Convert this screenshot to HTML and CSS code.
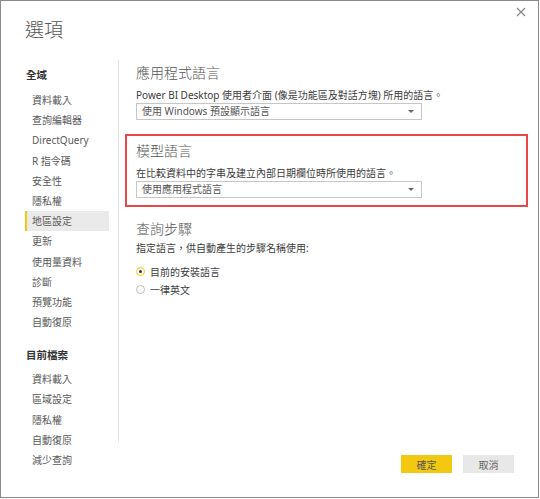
FILE: index.html
```html
<!DOCTYPE html>
<html lang="zh-Hant">
<head>
<meta charset="utf-8">
<title>選項</title>
<link rel="stylesheet" href="styles.css">
</head>
<body>
<div class="dialog">
  <div class="close" aria-label="關閉">
    <svg width="10" height="10" viewBox="0 0 10 10"><path d="M1 1 L9 9 M9 1 L1 9" stroke="#8a8a8a" stroke-width="1.2" fill="none"/></svg>
  </div>
  <h1 class="title">選項</h1>
  <div class="main">
    <nav class="nav">
      <div class="nav-head">全域</div>
      <div class="nav-item">資料載入</div>
      <div class="nav-item">查詢編輯器</div>
      <div class="nav-item">DirectQuery</div>
      <div class="nav-item">R 指令碼</div>
      <div class="nav-item">安全性</div>
      <div class="nav-item">隱私權</div>
      <div class="nav-item active">地區設定</div>
      <div class="nav-item">更新</div>
      <div class="nav-item">使用量資料</div>
      <div class="nav-item">診斷</div>
      <div class="nav-item">預覽功能</div>
      <div class="nav-item">自動復原</div>
      <div class="nav-head second">目前檔案</div>
      <div class="nav-item">資料載入</div>
      <div class="nav-item">區域設定</div>
      <div class="nav-item">隱私權</div>
      <div class="nav-item">自動復原</div>
      <div class="nav-item">減少查詢</div>
    </nav>
    <div class="right">
      <div class="content">
        <section class="section">
          <h2 class="heading">應用程式語言</h2>
          <p class="desc">Power BI Desktop 使用者介面 (像是功能區及對話方塊) 所用的語言。</p>
          <div class="select"><span>使用 Windows 預設顯示語言</span><i class="arrow"></i></div>
        </section>
        <section class="section highlight">
          <h2 class="heading">模型語言</h2>
          <p class="desc">在比較資料中的字串及建立內部日期欄位時所使用的語言。</p>
          <div class="select"><span>使用應用程式語言</span><i class="arrow"></i></div>
        </section>
        <section class="section steps">
          <h2 class="heading">查詢步驟</h2>
          <p class="desc">指定語言，供自動產生的步驟名稱使用:</p>
          <div class="radios">
            <div class="radio checked"><span class="dot"></span>目前的安裝語言</div>
            <div class="radio"><span class="dot"></span>一律英文</div>
          </div>
        </section>
      </div>
      <div class="footer">
        <button class="btn primary">確定</button>
        <button class="btn">取消</button>
      </div>
    </div>
  </div>
</div>
</body>
</html>
```

FILE: styles.css
```css
* { box-sizing: border-box; }
html, body { margin: 0; padding: 0; background: #ffffff; }
body {
  font-family: "Noto Sans", "Noto Sans CJK TC", sans-serif;
  color: #333;
}
.dialog {
  position: relative;
  width: 539px;
  height: 498px;
  border: 1px solid #8a8a8a;
  background: #fff;
}
.close {
  position: absolute;
  top: 6px;
  right: 12px;
  width: 10px;
  height: 10px;
  line-height: 0;
}
.title {
  margin: 15px 0 0 24px;
  font-size: 19px;
  line-height: 26px;
  font-weight: 300;
  color: #555;
  font-family: "Noto Sans CJK TC", sans-serif;
}
.main {
  display: flex;
  align-items: flex-start;
  margin-top: 18px;
}
.nav {
  width: 84px;
  margin-left: 24px;
  padding-top: 5px;
  font-size: 10px;
}
.nav-head {
  height: 20px;
  line-height: 20px;
  padding-left: 1px;
  font-size: 10.5px;
  font-weight: 700;
  color: #333;
  margin-bottom: 5px;
}
.nav-head.second { margin-top: 13px; margin-bottom: 4px; }
.nav-item {
  height: 20.2px;
  line-height: 20.2px;
  padding-left: 7px;
  color: #5a5a5a;
  white-space: nowrap;
}
.nav-item.active {
  background: #eaeaea;
  border-left: 2px solid #f2c811;
  padding-left: 5px;
}
.right {
  flex: 1;
  margin-left: 9px;
  display: flex;
  flex-direction: column;
}
.content {
  height: 382px;
  border-left: 1px solid #e3e3e3;
  padding: 2px 0 0 17px;
}
.section { margin: 0; }
.heading {
  margin: 0;
  font-size: 14px;
  line-height: 20px;
  font-weight: 300;
  color: #555;
  font-family: "Noto Sans CJK TC", sans-serif;
}
.desc {
  margin: 6px 0 0 0;
  font-size: 10px;
  line-height: 14px;
  color: #3c3c3c;
  white-space: nowrap;
}
.select {
  position: relative;
  width: 286px;
  height: 17px;
  margin-top: 1px;
  border: 1px solid #c6c6c6;
  padding-left: 5px;
  font-size: 10px;
  line-height: 15px;
  color: #555;
}
.arrow {
  position: absolute;
  right: 7px;
  top: 6px;
  width: 0;
  height: 0;
  border-left: 3px solid transparent;
  border-right: 3px solid transparent;
  border-top: 3px solid #666;
}
.highlight {
  width: 403px;
  margin: 14px 0 0 -11px;
  border: 2px solid #e8484a;
  padding: 4px 0 7px 9px;
}
.steps { margin-top: 11px; }
.steps .desc { margin-top: 3px; }
.radios { margin-top: 8px; }
.radio {
  display: flex;
  align-items: center;
  height: 17.5px;
  font-size: 10px;
  color: #3c3c3c;
}
.dot {
  width: 9px;
  height: 9px;
  border-radius: 50%;
  border: 1px solid #bdbdbd;
  margin: 0 5px 0 0;
  position: relative;
}
.radio.checked .dot {
  border: 1.5px solid #f2c811;
}
.radio.checked .dot::after {
  content: "";
  position: absolute;
  left: 1.5px;
  top: 1.5px;
  width: 3px;
  height: 3px;
  border-radius: 50%;
  background: #333;
}
.footer {
  display: flex;
  justify-content: flex-end;
  gap: 11px;
  margin-top: 13px;
  padding-right: 24px;
}
.btn {
  width: 51px;
  height: 18px;
  border: none;
  background: #e8e8e8;
  color: #666;
  font-family: "Noto Sans CJK TC", sans-serif;
  font-size: 10px;
  padding: 0;
}
.btn.primary {
  background: #f2c811;
  color: #555;
}
```
